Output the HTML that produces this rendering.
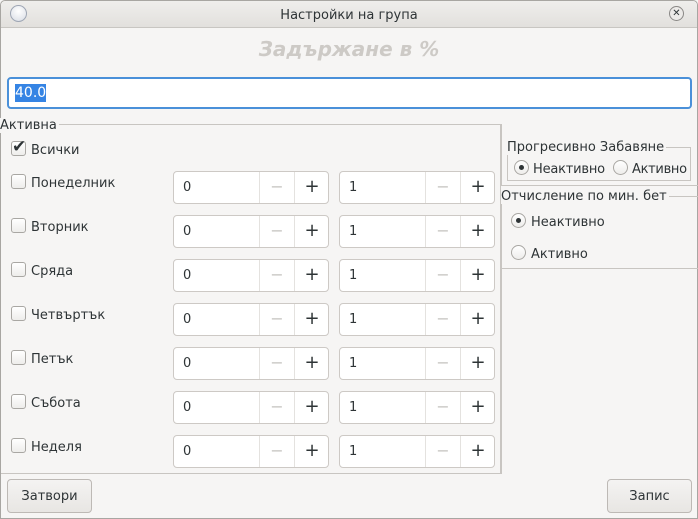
<!DOCTYPE html>
<html><head><meta charset="utf-8"><style>
*{box-sizing:border-box;margin:0;padding:0}
body{width:698px;height:519px;background:#f6f5f4;font-family:"DejaVu Sans","Liberation Sans",sans-serif;font-size:13px;color:#2e3436;position:relative;overflow:hidden}
.abs{position:absolute}
.t{margin-top:2px}
.win{left:0;top:0;width:698px;height:519px;border:1px solid #a8a6a2;border-radius:5px 5px 0 0}
.title{left:1px;top:1px;width:696px;height:27px;background:linear-gradient(#efeeec,#e2e0dd);border-bottom:1px solid #c8c6c2;border-radius:5px 5px 0 0;text-align:center;line-height:29px;font-size:13px;color:#2e3436}
.cb{width:15px;height:15px;border:1px solid #a9a7a3;border-radius:3px;background:linear-gradient(#fff,#eeedeb)}
.spin{height:33px;width:156px;border:1px solid #cdc9c5;border-radius:4px;background:#fff}
.spin .v{position:absolute;left:9px;top:8px}
.spin .m{position:absolute;left:85px;top:0;width:35px;height:31px;border-left:1px solid #e4e2df;color:#c8c6c3;text-align:center;line-height:30px;font-size:16px}
.spin .p{position:absolute;left:120px;top:0;width:35px;height:31px;border-left:1px solid #e4e2df;color:#2e3436;text-align:center;line-height:30px;font-size:18px}
.rad{width:15px;height:15px;border:1px solid #a9a7a3;border-radius:50%;background:linear-gradient(#fff,#eeedeb)}
.rad.on::after{content:"";position:absolute;left:4px;top:4px;width:5px;height:5px;border-radius:50%;background:#2e3436}
.btn{height:34px;border:1px solid #bdb9b5;border-radius:4px;background:linear-gradient(#f4f3f2,#e8e6e3);text-align:center;line-height:33px}
</style></head><body>
<div class="abs win"></div>
<div class="abs title">Настройки на група</div>
<div class="abs" style="left:10px;top:5px;width:17px;height:17px;border-radius:50%;border:1px solid #9ea6b4;background:radial-gradient(circle at 50% 35%,#fff,#d8dce4)"></div>
<div class="abs" style="left:669px;top:6px;width:15px;height:15px;border-radius:50%;border:1px solid #8a8886;background:#eceae8;font-size:10px;line-height:13px;text-align:center">✕</div>
<div class="abs" style="left:0;top:37px;width:698px;text-align:center;font-size:20px;font-weight:bold;font-style:italic;color:#cdcac6">Задържане в %</div>
<div class="abs" style="left:7px;top:77px;width:685px;height:32px;border:2px solid #4a90d9;border-radius:4px;background:#fff"></div>
<div class="abs" style="left:15px;top:84px;background:#3584e4;color:#fff;font-size:14px;line-height:18px">40.0</div>
<div class="abs" style="left:1px;top:124px;width:500px;height:350px;border:1px solid #c8c5c1;border-left:none"></div>
<div class="abs" style="left:0;top:118px;background:#f6f5f4;padding-right:2px">Активна</div>
<div class="abs cb" style="left:11px;top:141px"></div>
<div class="abs" style="left:12px;top:137px;font-size:17px;font-weight:bold">✔</div>
<div class="abs" style="left:31px;top:143px">Всички</div>

<div class="abs cb" style="left:11px;top:174px"></div><div class="abs" style="left:31px;top:176px">Понеделник</div>
<div class="abs cb" style="left:11px;top:218px"></div><div class="abs" style="left:31px;top:220px">Вторник</div>
<div class="abs cb" style="left:11px;top:262px"></div><div class="abs" style="left:31px;top:264px">Сряда</div>
<div class="abs cb" style="left:11px;top:306px"></div><div class="abs" style="left:31px;top:308px">Четвъртък</div>
<div class="abs cb" style="left:11px;top:350px"></div><div class="abs" style="left:31px;top:352px">Петък</div>
<div class="abs cb" style="left:11px;top:394px"></div><div class="abs" style="left:31px;top:396px">Събота</div>
<div class="abs cb" style="left:11px;top:438px"></div><div class="abs" style="left:31px;top:440px">Неделя</div>

<div class="abs spin" style="left:173px;top:171px"><span class="v">0</span><span class="m">−</span><span class="p">+</span></div>
<div class="abs spin" style="left:339px;top:171px"><span class="v">1</span><span class="m">−</span><span class="p">+</span></div>
<div class="abs spin" style="left:173px;top:215px"><span class="v">0</span><span class="m">−</span><span class="p">+</span></div>
<div class="abs spin" style="left:339px;top:215px"><span class="v">1</span><span class="m">−</span><span class="p">+</span></div>
<div class="abs spin" style="left:173px;top:259px"><span class="v">0</span><span class="m">−</span><span class="p">+</span></div>
<div class="abs spin" style="left:339px;top:259px"><span class="v">1</span><span class="m">−</span><span class="p">+</span></div>
<div class="abs spin" style="left:173px;top:303px"><span class="v">0</span><span class="m">−</span><span class="p">+</span></div>
<div class="abs spin" style="left:339px;top:303px"><span class="v">1</span><span class="m">−</span><span class="p">+</span></div>
<div class="abs spin" style="left:173px;top:347px"><span class="v">0</span><span class="m">−</span><span class="p">+</span></div>
<div class="abs spin" style="left:339px;top:347px"><span class="v">1</span><span class="m">−</span><span class="p">+</span></div>
<div class="abs spin" style="left:173px;top:391px"><span class="v">0</span><span class="m">−</span><span class="p">+</span></div>
<div class="abs spin" style="left:339px;top:391px"><span class="v">1</span><span class="m">−</span><span class="p">+</span></div>
<div class="abs spin" style="left:173px;top:435px"><span class="v">0</span><span class="m">−</span><span class="p">+</span></div>
<div class="abs spin" style="left:339px;top:435px"><span class="v">1</span><span class="m">−</span><span class="p">+</span></div>

<div class="abs" style="left:501px;top:124px;width:197px;height:62px;border:1px solid #c8c5c1;border-right:none;border-top:none"></div>
<div class="abs" style="left:507px;top:147px;width:184px;height:34px;border:1px solid #c8c5c1"></div>
<div class="abs" style="left:507px;top:140px;background:#f6f5f4;padding-right:2px">Прогресивно Забавяне</div>
<div class="abs rad on" style="left:514px;top:160px"></div>
<div class="abs" style="left:533px;top:162px;letter-spacing:-0.2px">Неактивно</div>
<div class="abs rad" style="left:613px;top:160px"></div>
<div class="abs" style="left:632px;top:162px;letter-spacing:-0.3px">Активно</div>

<div class="abs" style="left:501px;top:196px;width:197px;height:73px;border:1px solid #c8c5c1;border-right:none"></div>
<div class="abs" style="left:501px;top:189px;background:#f6f5f4;padding-right:2px">Отчисление по мин. бет</div>
<div class="abs rad on" style="left:511px;top:213px"></div>
<div class="abs" style="left:531px;top:215px">Неактивно</div>
<div class="abs rad" style="left:511px;top:245px"></div>
<div class="abs" style="left:531px;top:247px">Активно</div>
<div class="abs" style="left:501px;top:269px;width:1px;height:205px;background:#c8c5c1"></div>

<div class="abs btn" style="left:7px;top:479px;width:85px">Затвори</div>
<div class="abs btn" style="left:607px;top:479px;width:85px">Запис</div>
</body></html>
